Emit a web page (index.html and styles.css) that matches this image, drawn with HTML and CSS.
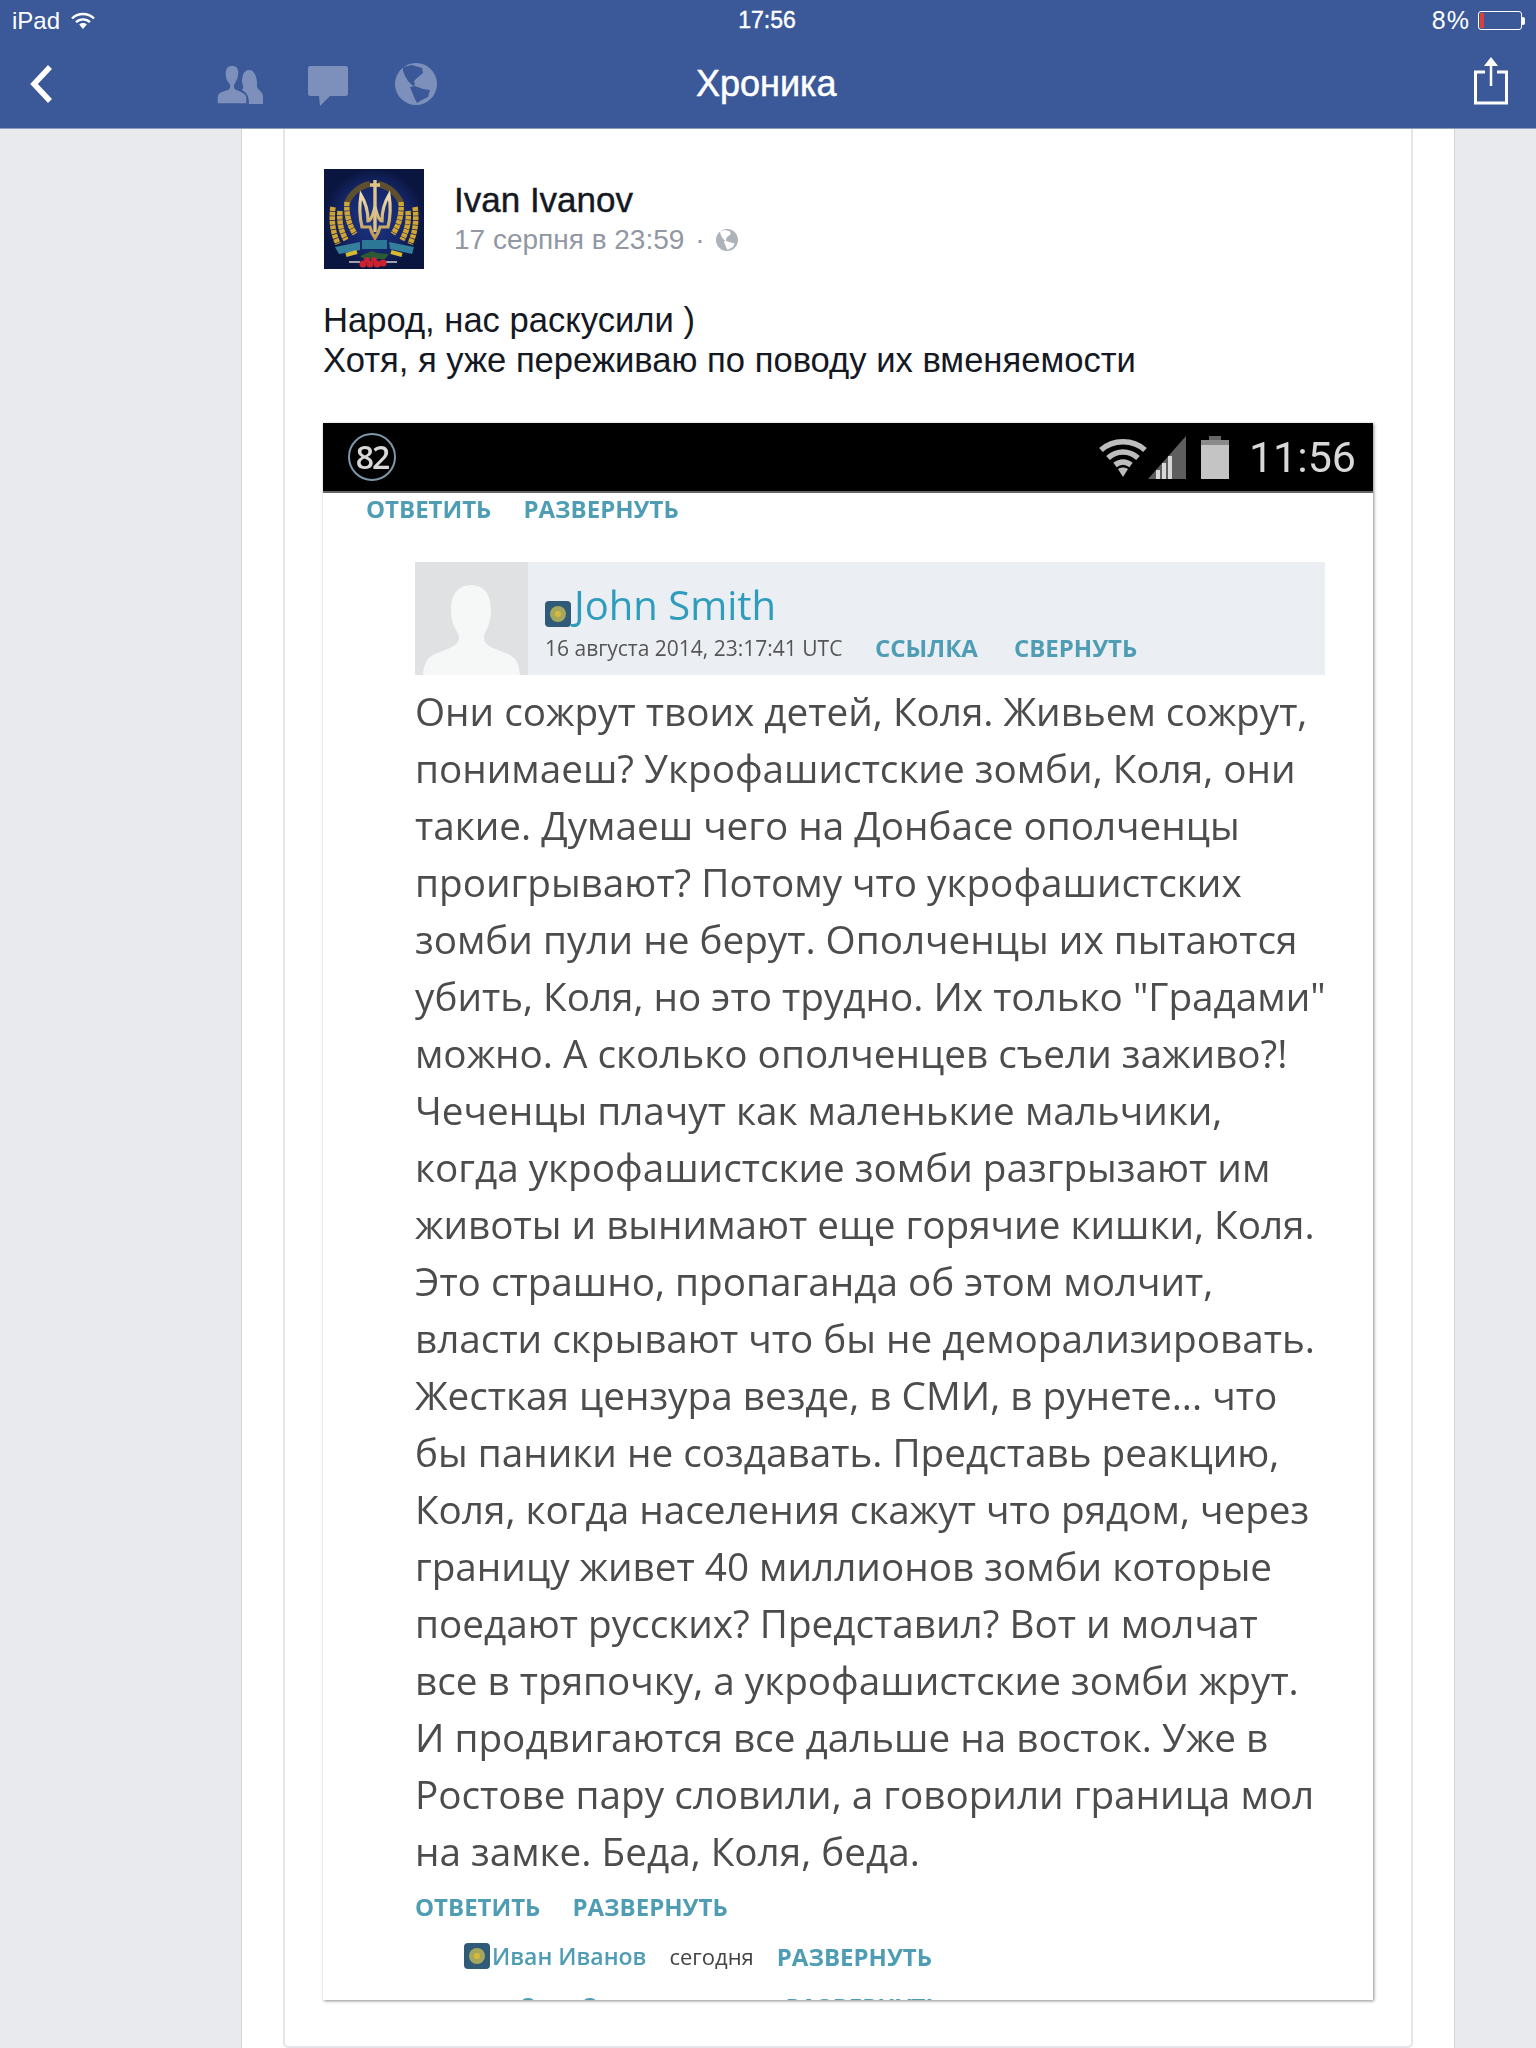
FILE: index.html
```html
<!DOCTYPE html>
<html lang="ru">
<head>
<meta charset="utf-8">
<title>Хроника</title>
<link rel="stylesheet" href="styles.css">
</head>
<body>
<header class="topbar">
  <div class="status">
    <div class="status-left">
      <span>iPad</span>
      <svg class="wifi" viewBox="0 0 24 18"><path d="M1 6.5C7 .5 17 .5 23 6.5M5 10.2c4-3.8 10-3.8 14 0" fill="none" stroke="#fff" stroke-width="2.4"/><path d="M8.2 12.5c2.300-1.900 5.300-1.900 7.600 0L12 17z" fill="#fff"/></svg>
    </div>
    <div class="status-time">17:56</div>
    <div class="status-right">
      <span class="pct">8%</span>
      <div class="battery"><i class="battery-level"></i></div>
      <i class="battery-nub"></i>
    </div>
  </div>
  <nav class="nav">
    <svg class="back" viewBox="0 0 24 40"><path d="M21 3 5 20l16 17" fill="none" stroke="#fff" stroke-width="5.500"/></svg>
    <svg class="ic-people" viewBox="0 0 46 39"><path fill="#7c90bb" d="M32 39c0-7-2-11-7-14 2-2 1-5 0-8 0-7 2-12 7-12s7 5 8 12v5c1 3 5 4 6 9v8z"/><path fill="#7c90bb" stroke="#3b5998" stroke-width="1.400" d="M0 39v-7c0-5 6-6 11-8 2-1 2-4 0-6-3-3-3-8-3-10 0-5 3-8 7-8s7 3 7 8c0 4-1 7-3 10-2 2-2 5 0 6 5 2 11 4 11 8v7z"/></svg>
    <svg class="ic-chat" viewBox="0 0 40 40"><path fill="#7c90bb" d="M2 0h36a2 2 0 0 1 2 2v26a2 2 0 0 1-2 2H22L12 40l-1-10H2a2 2 0 0 1-2-2V2a2 2 0 0 1 2-2z"/></svg>
    <svg class="ic-globe" viewBox="0 0 42 42"><circle cx="21" cy="21" r="21" fill="#7c90bb"/><path fill="#3b5998" d="M8 4l9-2 10 3 1 5-6 5-3 3 1 4-2 1-5-5-3-5-2-5zM15 24l5-1 8 3 7 1-2 7-6 3-5 3-3-6-2-5z"/></svg>
    <h1 class="nav-title">Хроника</h1>
    <svg class="ic-share" viewBox="0 0 34 48"><path d="M11 15H1.500v31h31V15H23" fill="none" stroke="#fff" stroke-width="3"/><path d="M17 3v26" stroke="#fff" stroke-width="2.500"/><path d="M17 0l7 9H10z" fill="#fff"/></svg>
  </nav>
</header>

<main class="column">
  <article class="card">
    <div class="author">
      <svg class="avatar" viewBox="0 0 100 100">
        <defs>
          <radialGradient id="bg"><stop offset="0" stop-color="#1c3585"/><stop offset=".7" stop-color="#142566"/><stop offset="1" stop-color="#0b1640"/></radialGradient>
          <linearGradient id="gold" x1="0" y1="0" x2="0" y2="1"><stop offset="0" stop-color="#f0dcae"/><stop offset="1" stop-color="#bd9750"/></linearGradient>
        </defs>
        <rect width="100" height="100" fill="url(#bg)"/>
        <path d="M23 34C27 24 36 17 46 15M77 34C73 24 64 17 54 15" stroke="#5e4f2e" stroke-width="6" fill="none"/>
        <path d="M9 38c-2 14 0 26 5 37M16 42c-1 11 1 20 6 29M23 33c-1 12 2 23 8 32" stroke="#d0a531" stroke-width="5.500" stroke-dasharray="4 .6" fill="none"/>
        <path d="M91 38c2 14 0 26-5 37M84 42c1 11-1 20-6 29M77 33c1 12-2 23-8 32" stroke="#d0a531" stroke-width="5.500" stroke-dasharray="4 .6" fill="none"/>
        <path d="M51 11v52M46 16h10" stroke="#e0c48a" stroke-width="3.400" fill="none"/>
        <path d="M37 26c-2 12-1 24 1 32h8c1 5 3 8 5 11 2-3 4-6 5-11h8c2-8 3-20 1-32-5 8-7 18-7 26-3 0-5-6-7-14-2 8-4 14-7 14 0-8-2-18-7-26z" fill="none" stroke="url(#gold)" stroke-width="3.200"/>
        <path d="M11 78l25-5v8l-21 4z" fill="#347f9c"/>
        <path d="M38 71h25v9H38z" fill="#2b7795"/>
        <path d="M65 73l25 5-2 7-22-5z" fill="#347f9c"/>
        <path d="M22 86l11-3M78 86l-11-3" stroke="#d6b92e" stroke-width="4"/>
        <path d="M36 87l12-5 5 2 12 1-4 5H40z" fill="#2c5a34"/>
        <path d="M25 93h11M62 93h11" stroke="#cfcfcf" stroke-width="1.500"/>
        <g fill="#cb2230"><circle cx="39" cy="95" r="3.500"/><circle cx="46" cy="95" r="3.500"/><circle cx="53" cy="95" r="3.500"/><circle cx="59" cy="94" r="3.500"/><circle cx="43" cy="91" r="2.800"/><circle cx="50" cy="91" r="2.800"/></g>
      </svg>
      <div class="author-meta">
        <div class="author-name">Ivan Ivanov</div>
        <div class="author-date">
          <span>17 серпня в 23:59</span><span class="dot">·</span>
          <svg class="mini-globe" viewBox="0 0 42 42"><circle cx="21" cy="21" r="21" fill="#aeb2bb"/><path fill="#fff" d="M8 4l9-2 10 3 1 5-6 5-3 3 1 4-2 1-5-5-3-5-2-5zM15 24l5-1 8 3 7 1-2 7-6 3-5 3-3-6-2-5z"/></svg>
        </div>
      </div>
    </div>
    <p class="post-text">Народ, нас раскусили )<br>Хотя, я уже переживаю по поводу их вменяемости</p>

    <div class="shot">
      <div class="phone-status">
        <div class="badge">82</div>
        <div class="phone-icons">
          <svg class="p-wifi" viewBox="0 0 50 40"><path d="M3 13c12-11 32-11 44 0M10 21c9-8 21-8 30 0M17 28c5-4 11-4 16 0" fill="none" stroke="#bdbdbd" stroke-width="5.500"/><path d="M20 32c3-2 7-2 10 0l-5 8z" fill="#bdbdbd"/></svg>
          <svg class="p-signal" viewBox="0 0 38 43"><path d="M0 43 38 0v43z" fill="#5e5e5e"/><path d="M10 43v-9M16 43V27M22 43V20" stroke="#d8d8d8" stroke-width="4"/></svg>
          <svg class="p-batt" viewBox="0 0 28 43"><path d="M8 0h12v4H8z" fill="#666"/><path d="M0 4h28v39H0z" fill="#c4c4c4"/><path d="M0 4h28v5H0z" fill="#8a8a8a"/></svg>
          <span class="p-time">11:56</span>
        </div>
      </div>
      <div class="shot-body">
        <div class="actions actions-top"><span>ОТВЕТИТЬ</span><span>РАЗВЕРНУТЬ</span></div>
        <section class="comment">
          <div class="comment-head">
            <svg class="ghost" viewBox="0 0 113 113"><rect width="113" height="113" fill="#dfe1e2"/><path fill="#f6f7f7" d="M8 113c1-12 4-18 14-22 14-5 22-8 22-15 0-5-5-9-7-18-2-9-3-35 19-35s21 26 19 35c-2 9-6 13-6 18 0 7 8 10 22 15 10 4 13 10 14 22z"/></svg>
            <div class="head-main">
              <div class="head-name"><svg class="flag" viewBox="0 0 26 26"><rect width="26" height="26" rx="4" fill="#2f5a78"/><circle cx="13" cy="13" r="8" fill="#a5a85c"/><circle cx="13" cy="13" r="3" fill="#d9b93c"/></svg><span>John Smith</span></div>
              <div class="head-sub"><span class="head-date">16 августа 2014, 23:17:41 UTC</span><span class="link">ССЫЛКА</span><span class="link">СВЕРНУТЬ</span></div>
            </div>
          </div>
          <p class="comment-text">Они сожрут твоих детей, Коля. Живьем сожрут,<br>понимаеш? Укрофашистские зомби, Коля, они<br>такие. Думаеш чего на Донбасе ополченцы<br>проигрывают? Потому что укрофашистских<br>зомби пули не берут. Ополченцы их пытаются<br>убить, Коля, но это трудно. Их только "Градами"<br>можно. А сколько ополченцев съели заживо?!<br>Чеченцы плачут как маленькие мальчики,<br>когда укрофашистские зомби разгрызают им<br>животы и вынимают еще горячие кишки, Коля.<br>Это страшно, пропаганда об этом молчит,<br>власти скрывают что бы не деморализировать.<br>Жесткая цензура везде, в СМИ, в рунете... что<br>бы паники не создавать. Представь реакцию,<br>Коля, когда населения скажут что рядом, через<br>границу живет 40 миллионов зомби которые<br>поедают русских? Представил? Вот и молчат<br>все в тряпочку, а укрофашистские зомби жрут.<br>И продвигаются все дальше на восток. Уже в<br>Ростове пару словили, а говорили граница мол<br>на замке. Беда, Коля, беда.</p>
          <div class="actions actions-bottom"><span>ОТВЕТИТЬ</span><span>РАЗВЕРНУТЬ</span></div>
          <div class="reply">
            <svg class="flag" viewBox="0 0 26 26"><rect width="26" height="26" rx="4" fill="#2f5a78"/><circle cx="13" cy="13" r="8" fill="#a5a85c"/><circle cx="13" cy="13" r="3" fill="#d9b93c"/></svg><span class="reply-name">Иван Иванов</span><span class="reply-when">сегодня</span><span class="link">РАЗВЕРНУТЬ</span>
          </div>
          <div class="reply reply-cut"><span class="reply-name">Олег Орлов</span><span class="reply-when">сегодня</span><span class="link">РАЗВЕРНУТЬ</span></div>
        </section>
      </div>
    </div>
  </article>
</main>
</body>
</html>
```

FILE: styles.css
```css
* { box-sizing: border-box; }
html, body { margin: 0; padding: 0; }
body {
  height: 2048px;
  overflow: hidden;
  background: #e9eaed;
  font-family: "Liberation Sans", Arial, sans-serif;
}
.topbar {
  height: 129px;
  background: #3b5998;
  border-bottom: 1px solid #8d9cbe;
  color: #fff;
}
.status {
  height: 41px;
  display: grid;
  grid-template-columns: 1fr auto 1fr;
  align-items: center;
  padding: 0 11px 0 12px;
  font-size: 24px;
}
.status-left { display: flex; align-items: center; gap: 11px; }
.wifi { width: 24px; height: 18px; }
.status-time { font-size: 23px; -webkit-text-stroke: .4px #fff; margin-right: 3px; }
.status-right { display: flex; align-items: center; justify-content: flex-end; }
.pct { font-size: 25px; letter-spacing: 1px; }
.battery {
  width: 44px;
  height: 19px;
  margin-left: 8px;
  border: 1px solid #fff;
  border-radius: 3px;
  padding: 1px;
}
.battery-level { display: block; width: 4px; height: 100%; background: #d9403f; }
.battery-nub { width: 3px; height: 8px; background: #fff; border-radius: 0 2px 2px 0; }
.nav {
  height: 87px;
  display: flex;
  align-items: flex-start;
  padding-left: 29px;
}
.back { width: 24px; height: 40px; margin-top: 23px; }
.ic-people { width: 46px; height: 39px; margin: 24px 0 0 164px; }
.ic-chat { width: 40px; height: 40px; margin: 25px 0 0 45px; }
.ic-globe { width: 42px; height: 42px; margin: 22px 0 0 47px; }
.nav-title {
  margin: 23px 0 0 259px;
  font-size: 36px;
  line-height: 40px;
  font-weight: 400;
  -webkit-text-stroke: .5px #fff;
}
.ic-share { width: 34px; height: 48px; margin: 16px 28px 0 auto; }

.column {
  width: 1214px;
  height: 1919px;
  margin-left: 241px;
  background: #fff;
  border-left: 1px solid #d5d6d9;
  border-right: 1px solid #d5d6d9;
  padding: 0 41px;
}
.card {
  height: 1919px;
  background: #fff;
  border: 2px solid #e4e5e9;
  border-top: 0;
  border-radius: 0 0 5px 5px;
  padding: 40px 0 0 39px;
}
.author { display: flex; align-items: flex-start; }
.avatar { width: 100px; height: 100px; display: block; flex: none; }
.author-meta { margin-left: 30px; padding-top: 11px; }
.author-name {
  font-size: 35px;
  line-height: 40px;
  color: #141823;
  -webkit-text-stroke: .4px #141823;
}
.author-date {
  display: flex;
  align-items: center;
  margin-top: 2px;
  font-size: 28px;
  line-height: 36px;
  color: #9197a3;
}
.dot { margin: 0 11px; }
.mini-globe { width: 22px; height: 22px; }
.post-text {
  margin: 31px 0 0 -1px;
  font-size: 34.6px;
  line-height: 40px;
  color: #141823;
  white-space: nowrap;
}

.shot {
  width: 1050px;
  height: 1577px;
  margin: 43px 0 0 -1px;
  background: #fff;
  box-shadow: 1px 1px 3px rgba(0, 0, 0, .45);
  overflow: hidden;
  filter: blur(.6px);
  font-family: "Open Sans", sans-serif;
}
.phone-status {
  height: 70px;
  background: #000;
  border-bottom: 2px solid #666;
  display: flex;
  align-items: center;
  justify-content: space-between;
  padding: 0 17px 0 25px;
}
.badge {
  width: 48px;
  height: 48px;
  border: 2px solid #7d97a8;
  border-radius: 50%;
  color: #d8d8d8;
  font-size: 32px;
  font-weight: 600;
  letter-spacing: -2px;
  text-align: center;
  line-height: 44px;
}
.phone-icons { display: flex; align-items: center; }
.p-wifi { width: 50px; height: 40px; }
.p-signal { width: 38px; height: 43px; }
.p-batt { width: 28px; height: 43px; margin-left: 15px; }
.p-time {
  margin-left: 20px;
  font-family: "Roboto", sans-serif;
  font-weight: 400;
  font-size: 43px;
  line-height: 50px;
  color: #d8d8d8;
}
.shot-body { padding: 0 0 0 43px; }
.actions {
  display: flex;
  gap: 32px;
  font-size: 24px;
  font-weight: 700;
  color: #4f9db4;
  white-space: nowrap;
}
.actions-top { height: 69px; line-height: 32px; }
.comment { width: 910px; margin-left: 49px; }
.comment-head { display: flex; height: 113px; background: #ebeef2; }
.ghost { width: 113px; height: 113px; flex: none; }
.head-main { padding: 21px 0 0 17px; }
.head-name {
  display: flex;
  align-items: flex-end;
  height: 44px;
  font-size: 40px;
  font-weight: 500;
  line-height: 44px;
  color: #2e9cbd;
  white-space: nowrap;
}
.flag { width: 26px; height: 26px; flex: none; margin-right: 3px; }
.head-sub {
  display: flex;
  align-items: center;
  margin-top: 6px;
  font-size: 21px;
  line-height: 30px;
  color: #555;
  white-space: nowrap;
}
.head-date { width: 330px; }
.link { font-size: 24px; font-weight: 700; color: #4f9db4; margin-right: 36px; white-space: nowrap; }
.comment-text {
  margin: 8px 0 0;
  font-size: 38.7px;
  line-height: 57px;
  color: #4c4c4c;
  white-space: nowrap;
}
.actions-bottom { height: 36px; margin-top: 9px; line-height: 36px; }
.reply {
  display: flex;
  align-items: center;
  height: 36px;
  margin: 13px 0 0 49px;
  white-space: nowrap;
  font-size: 23px;
}
.reply .flag { margin-right: 2px; }
.reply-name { font-weight: 600; color: #4f9db4; }
.reply-when { margin-left: 23px; font-size: 22px; color: #444; }
.reply .link { margin-left: 23px; }
.reply-cut { margin-top: 14px; padding-left: 55px; }
```
